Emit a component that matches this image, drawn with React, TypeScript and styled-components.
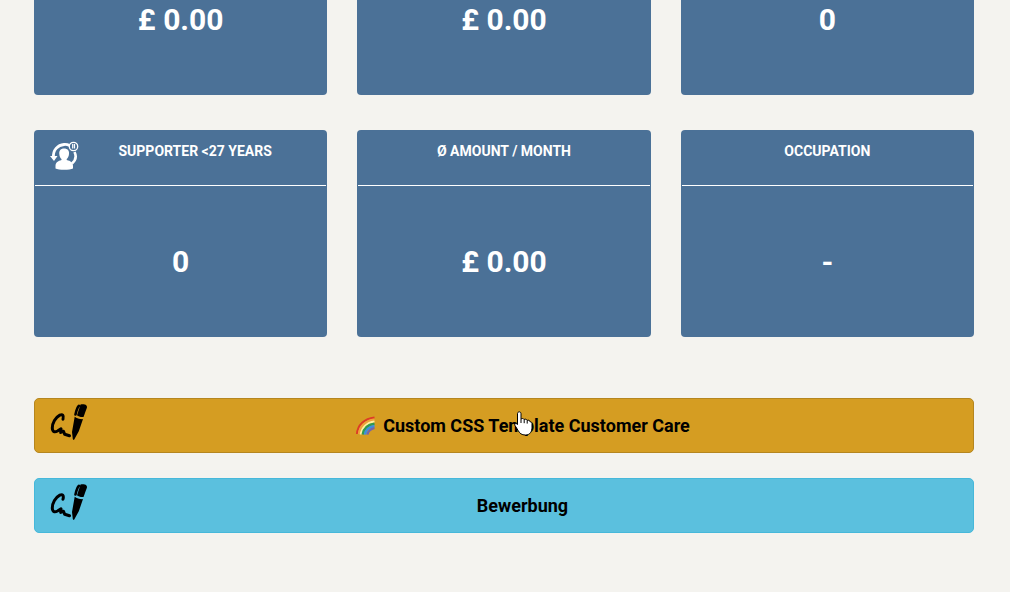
import React from "react";
import styled, { createGlobalStyle } from "styled-components";

const GlobalStyle = createGlobalStyle`
  *, *::before, *::after { box-sizing: border-box; }
  body {
    margin: 0;
    background: #f4f3ef;
    color: #000;
    font-family: Roboto, "Liberation Sans", sans-serif;
  }
`;

const Page = styled.main`
  display: flex;
  flex-direction: column;
  padding: 0 36px 58px 34px;
`;

const StatGrid = styled.section`
  display: grid;
  grid-template-columns: repeat(3, minmax(0, 1fr));
  column-gap: 30px;
  row-gap: 35px;
`;

const Card = styled.article<{ $continued?: boolean }>`
  background: #4b7197;
  color: #fff;
  padding: 0 1px;
  border-radius: ${(p) => (p.$continued ? "0 0 4px 4px" : "4px")};
`;

const CardHeader = styled.header`
  display: flex;
  align-items: flex-start;
  height: 56px;
  padding: 11px 15px 0;
  border-bottom: 1px solid #fff;
`;

const CardTitle = styled.h2`
  flex: 1;
  margin: 0;
  font-size: 14px;
  line-height: 20px;
  font-weight: 700;
  text-align: center;
  text-transform: uppercase;
`;

const CardValue = styled.p<{ $continued?: boolean }>`
  margin: 0;
  padding: ${(p) => (p.$continued ? "1px 0 56px" : "57px 0 56px")};
  font-size: 30px;
  line-height: 38px;
  font-weight: 700;
  text-align: center;
`;

const Actions = styled.nav`
  display: flex;
  flex-direction: column;
  gap: 25px;
  margin-top: 61px;
`;

const ActionButton = styled.button<{ $tone: "amber" | "sky" }>`
  display: flex;
  align-items: flex-start;
  width: 100%;
  height: 55px;
  padding: 5px 15px;
  border: 1px solid ${(p) => (p.$tone === "amber" ? "#b5861f" : "#46b8da")};
  border-radius: 5px;
  background: ${(p) => (p.$tone === "amber" ? "#d59d22" : "#5bc0de")};
  color: #000;
  font: inherit;
  font-size: 18px;
  line-height: 24px;
  font-weight: 700;
  cursor: pointer;
`;

const ActionLabel = styled.span`
  position: relative;
  display: flex;
  flex: 1;
  align-items: center;
  justify-content: center;
  gap: 8px;
  height: 43px;
`;

const Pointer = styled.svg`
  position: absolute;
  left: calc(50% - 9px);
  top: 7px;
  pointer-events: none;
`;

const SupporterIcon = () => (
  <svg width="29" height="30" viewBox="0 0 29 30" fill="none" aria-hidden="true">
    <path d="M3.500 17C2.500 9 8 4 14 3.500C16.500 3.300 18 3.700 19.500 4.500" stroke="#fff" strokeWidth="2.800" />
    <path d="M0 15h7.500L4 20z" fill="#fff" />
    <path d="M24.500 11c2 4 1 8.500-2.500 11.500" stroke="#fff" strokeWidth="2.600" />
    <circle cx="23.500" cy="5.500" r="4.200" stroke="#fff" strokeWidth="1.300" />
    <path d="M22.700 3v4.500M24.500 3v4.500" stroke="#fff" strokeWidth="1.200" />
    <path
      d="M14 7.500c3.500 0 5.500 2.200 5 5.500c-.2 2.500-1.200 4-2.300 5v1c4 1 6.300 2.400 6.300 6v2.500c-3 1.700-14.500 1.700-17.500 0V25c0-3.600 2.500-5 6-6v-1c-1.200-1-2-2.500-2.200-5c-.4-3.300 1.500-5.500 4.700-5.500z"
      fill="#fff"
    />
  </svg>
);

const SignatureIcon = () => (
  <svg width="37" height="37" viewBox="0 0 37 37" fill="none" aria-hidden="true">
    <path
      d="M13 15.200C14 11.500 12.500 9.800 9.800 11.200C5.500 13.500 2.300 19 2.300 24C2.400 28 4.800 28.500 7.500 27L11 24.800L10.700 28.500L13.400 27.200L14.700 30.300L19.500 31.800"
      stroke="#000"
      strokeWidth="3"
      strokeLinecap="round"
      strokeLinejoin="round"
    />
    <path d="M30.500 .4c2-.5 4.500-.3 5.800.8c.7.8.8 1.700.6 2.600l-3.400 9.200c-2.500.3-5-.3-6.500-1.700z" fill="#000" />
    <path d="M24.700 12.800c2 1.500 5.300 2.500 8.300 2.300l-4.200 12.200l-4.700 8.500c-.7.300-1.200 0-1.300-.7l-.8-7z" fill="#000" />
    <path d="M29 1.800c-1.800 1.500-2.700 5-3.500 8.700" stroke="#000" strokeWidth="2.600" strokeLinecap="round" />
  </svg>
);

const RainbowIcon = () => (
  <svg width="20" height="20" viewBox="0 0 20 20" fill="none" aria-hidden="true">
    <path d="M2 18C2.500 9 9.500 2.500 19.500 1.500" stroke="#dc3b28" strokeWidth="2" />
    <path d="M3.800 18C4.500 10.500 10.500 4.500 19.500 3.500" stroke="#f0a23a" strokeWidth="2" />
    <path d="M5.700 18.500C6.500 12 11.500 6.500 19.500 5.500" stroke="#fff0a0" strokeWidth="2" />
    <path d="M7.700 18.500C8.500 13 12.500 8.700 19.500 7.700" stroke="#2f9a50" strokeWidth="2.400" />
    <path d="M10 18.700C10.500 14.500 14 11 19.500 10" stroke="#3b8fe0" strokeWidth="2.600" />
    <path d="M12.500 18.700C13 15.500 15.500 13 19.500 12" stroke="#7565a8" strokeWidth="2" />
  </svg>
);

const HandPointer = () => (
  <Pointer width="20" height="25" viewBox="0 0 20 25" aria-hidden="true">
    <path
      d="M3.500 2.700c0-2.500 3.500-2.500 3.500 0V8c.8-.8 2.600-.6 3.100.5c1-.7 2.600-.3 3 .9c1.200-.7 2.900 0 3.100 1.500c1.200-.2 1.800.6 1.800 1.800v3.500c0 4.500-2 7.800-6.500 7.800c-4 0-5.700-1.500-7.500-4.700L1 14.500c-1-1.800 1-2.700 2.500-1z"
      fill="#fff"
      stroke="#000"
    />
    <path d="M7 8v4M10.200 8.700v3.500M13.200 9.600v3" stroke="#000" strokeWidth="1" />
  </Pointer>
);

const previousValues = ["£ 0.00", "£ 0.00", "0"];

const stats = [
  { title: "Supporter <27 years", value: "0", icon: <SupporterIcon /> },
  { title: "Ø Amount / Month", value: "£ 0.00" },
  { title: "Occupation", value: "-" },
];

export default function App() {
  return (
    <>
      <GlobalStyle />
      <Page>
        <StatGrid>
          {previousValues.map((value, index) => (
            <Card key={index} $continued>
              <CardValue $continued>{value}</CardValue>
            </Card>
          ))}
          {stats.map((stat) => (
            <Card key={stat.title}>
              <CardHeader>
                {stat.icon}
                <CardTitle>{stat.title}</CardTitle>
              </CardHeader>
              <CardValue>{stat.value}</CardValue>
            </Card>
          ))}
        </StatGrid>
        <Actions>
          <ActionButton type="button" $tone="amber">
            <SignatureIcon />
            <ActionLabel>
              <RainbowIcon />
              Custom CSS Template Customer Care
              <HandPointer />
            </ActionLabel>
          </ActionButton>
          <ActionButton type="button" $tone="sky">
            <SignatureIcon />
            <ActionLabel>Bewerbung</ActionLabel>
          </ActionButton>
        </Actions>
      </Page>
    </>
  );
}
